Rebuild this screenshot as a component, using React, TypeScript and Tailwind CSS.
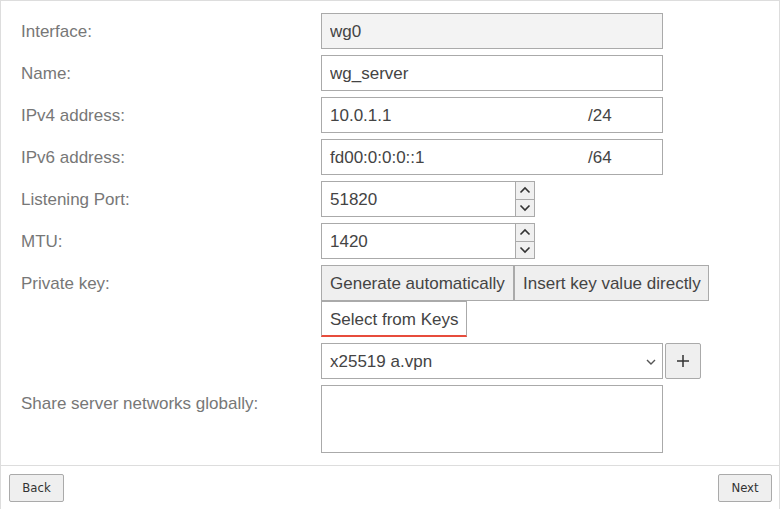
import React from "react";

const labelCls = "w-[300px] shrink-0 h-[36px] flex items-center pt-[2px] text-[17px] text-[#777]";
const boxCls = "h-[36px] border border-[#aaa] text-[17px] text-[#444] outline-none pt-[2px]";

function Chevron({ up }: { up?: boolean }) {
  return (
    <svg width="12" height="8" viewBox="0 0 12 8" fill="none" stroke="#333" strokeWidth="1.6">
      {up ? <path d="M1.5 6.5 6 2l4.5 4.5" /> : <path d="M1.5 1.5 6 6l4.5-4.5" />}
    </svg>
  );
}

function Spin({ value }: { value: string }) {
  return (
    <div className="flex h-[36px]">
      <input readOnly value={value} className={`${boxCls} px-[8px] w-[195px] bg-white`} />
      <div className="flex flex-col w-[19px] border border-l-0 border-[#aaa] bg-[#f0f0f0]">
        <div className="flex-1 flex items-center justify-center border-b border-[#aaa]">
          <Chevron up />
        </div>
        <div className="flex-1 flex items-center justify-center">
          <Chevron />
        </div>
      </div>
    </div>
  );
}

function Prefix({ addr, prefix }: { addr: string; prefix: string }) {
  return (
    <div className={`${boxCls} w-[342px] flex items-center bg-white`}>
      <span className="w-[266px] pl-[8px]">{addr}</span>
      <span>/{prefix}</span>
    </div>
  );
}

function Row({ label, children }: { label: string; children: React.ReactNode }) {
  return (
    <div className="flex">
      <div className={labelCls}>{label}</div>
      <div className="flex flex-col">{children}</div>
    </div>
  );
}

const btnCls = "h-[36px] border border-[#aaa] bg-[#efefef] text-[17px] text-[#444] text-left pl-[8px] pt-[2px] whitespace-nowrap";

export default function App() {
  return (
    <div
      className="w-[780px] h-[509px] border border-[#ddd] border-b-0 bg-white flex flex-col"
      style={{ fontFamily: '"Liberation Sans", Arial, sans-serif' }}
    >
      <div className="flex-1 pl-[20px] pt-[12px] flex flex-col gap-[6px]">
        <Row label="Interface:">
          <input readOnly value="wg0" className={`${boxCls} px-[8px] w-[342px] bg-[#f3f3f3]`} />
        </Row>
        <Row label="Name:">
          <input readOnly value="wg_server" className={`${boxCls} px-[8px] w-[342px] bg-white`} />
        </Row>
        <Row label="IPv4 address:">
          <Prefix addr="10.0.1.1" prefix="24" />
        </Row>
        <Row label="IPv6 address:">
          <Prefix addr="fd00:0:0:0::1" prefix="64" />
        </Row>
        <Row label="Listening Port:">
          <Spin value="51820" />
        </Row>
        <Row label="MTU:">
          <Spin value="1420" />
        </Row>
        <Row label="Private key:">
          <div className="flex">
            <button className={`${btnCls} w-[193px]`}>Generate automatically</button>
            <button className={`${btnCls} w-[195px]`}>Insert key value directly</button>
          </div>
          <div className="flex">
            <button className="h-[36px] w-[146px] border border-[#aaa] border-b-[2px] border-b-[#e74c3c] bg-white text-[17px] text-[#444] text-left pl-[8px] pt-[2px] whitespace-nowrap">
              Select from Keys
            </button>
          </div>
          <div className="flex gap-[2px] mt-[6px]">
            <div className={`${boxCls} w-[342px] bg-white flex items-center justify-between pl-[8px] pr-[6px]`}>
              <span>x25519 a.vpn</span>
              <svg width="10" height="6" viewBox="0 0 10 6" fill="none" stroke="#555" strokeWidth="1.4">
                <path d="M1 1l4 4 4-4" />
              </svg>
            </div>
            <button className="h-[36px] w-[36px] border border-[#aaa] rounded-[2px] bg-[#efefef] flex items-center justify-center">
              <svg width="12" height="12" viewBox="0 0 12 12" stroke="#333" strokeWidth="1.5">
                <path d="M6 0v12M0 6h12" />
              </svg>
            </button>
          </div>
        </Row>
        <Row label="Share server networks globally:">
          <textarea readOnly className="w-[342px] h-[68px] border border-[#aaa] bg-white resize-none outline-none" />
        </Row>
      </div>
      <div
        className="h-[44px] border-t border-[#ddd] flex justify-between items-start pt-[8px] pl-[8px] pr-[7px]"
        style={{ fontFamily: '"DejaVu Sans Condensed", "DejaVu Sans", sans-serif', fontStretch: "condensed" }}
      >
        <button className="h-[28px] w-[55px] border border-[#aaa] rounded-[2px] bg-[#efefef] text-[13px] text-[#333]">
          Back
        </button>
        <button className="h-[28px] w-[54px] border border-[#aaa] rounded-[2px] bg-[#efefef] text-[13px] text-[#333]">
          Next
        </button>
      </div>
    </div>
  );
}
